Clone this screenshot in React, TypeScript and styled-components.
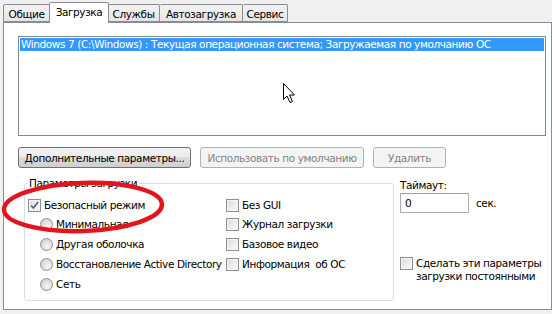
import React from 'react';
import styled, {createGlobalStyle} from 'styled-components';

const GlobalStyle = createGlobalStyle`
  html, body {
    margin: 0;
    padding: 0;
    background: #f0f0f0;
  }
  body {
    font-family: "DejaVu Sans", Tahoma, sans-serif;
    font-size: 10.5px;
    letter-spacing: -0.4px;
    color: #000;
  }
`;

const tabs = [
  {title: 'Общие', width: 47},
  {title: 'Загрузка', width: 60, active: true},
  {title: 'Службы', width: 52},
  {title: 'Автозагрузка', width: 83},
  {title: 'Сервис', width: 45},
];

export default function App() {
  return (
      <Window>
        <GlobalStyle/>
        <TabStrip>
          {tabs.map(t => (
              <Tab key={t.title} $width={t.width} $active={!!t.active}>{t.title}</Tab>
          ))}
        </TabStrip>
        <Panel>
          <ListBox>
            <ListItem $selected>Windows 7 (C:\Windows) : Текущая операционная система; Загружаемая по умолчанию ОС</ListItem>
          </ListBox>
          <ButtonRow>
            <Button $width={173}>Дополнительные параметры...</Button>
            <Button $width={164} disabled>Использовать по умолчанию</Button>
            <Button $width={73} disabled>Удалить</Button>
          </ButtonRow>
          <Lower>
            <GroupBox>
              <Legend>Параметры загрузки</Legend>
              <GroupGrid>
                <Column>
                  <Option>
                    <CheckBox checked/>
                    Безопасный режим
                  </Option>
                  <Option $indent>
                    <Radio/>
                    Минимальная
                  </Option>
                  <Option $indent>
                    <Radio/>
                    Другая оболочка
                  </Option>
                  <Option $indent>
                    <Radio/>
                    Восстановление Active Directory
                  </Option>
                  <Option $indent>
                    <Radio/>
                    Сеть
                  </Option>
                </Column>
                <Column>
                  <Option>
                    <CheckBox/>
                    Без GUI
                  </Option>
                  <Option>
                    <CheckBox/>
                    Журнал загрузки
                  </Option>
                  <Option>
                    <CheckBox/>
                    Базовое видео
                  </Option>
                  <Option>
                    <CheckBox/>
                    Информация&nbsp; об ОС
                  </Option>
                </Column>
              </GroupGrid>
            </GroupBox>
            <SideColumn>
              <Caption>Таймаут:</Caption>
              <TimeoutRow>
                <TextInput>0</TextInput>
                <span>сек.</span>
              </TimeoutRow>
              <PermanentRow>
                <CheckBox/>
                <span>Сделать эти параметры<br/>загрузки постоянными</span>
              </PermanentRow>
            </SideColumn>
          </Lower>
        </Panel>
        <Overlay width="552" height="314" viewBox="0 0 552 314">
          <ellipse cx="83" cy="207" rx="79" ry="24" transform="rotate(-2 83 207)"
                   fill="none" stroke="#e3141c" strokeWidth="4.5"/>
          <path d="M283.5 83.5 L283.5 99.5 L287 96 L290 102.5 L292.5 101.5 L289.5 95 L294.5 95 Z"
                fill="#fff" stroke="#000" strokeWidth="1" strokeLinejoin="miter"/>
        </Overlay>
      </Window>
  );
}

function CheckBox({checked}: { checked?: boolean }) {
  return (
      <Box>
        {checked && (
            <svg width="9" height="9" viewBox="0 0 9 9">
              <path d="M1 4.5 L3.5 7 L8 1" fill="none" stroke="#4a5f97" strokeWidth="1.6"/>
            </svg>
        )}
      </Box>
  );
}

const Window = styled.div`
  position: relative;
  width: 552px;
  height: 314px;
  overflow: hidden;
  background: #f0f0f0;
  display: flex;
  flex-direction: column;
`;

const TabStrip = styled.div`
  display: flex;
  align-items: flex-end;
  height: 22px;
  padding-left: 3px;
`;

const Tab = styled.div<{ $width: number; $active: boolean }>`
  box-sizing: border-box;
  width: ${p => p.$width}px;
  height: ${p => (p.$active ? 21 : 18)}px;
  margin: 0 ${p => (p.$active ? -1 : 0)}px ${p => (p.$active ? -1 : 0)}px;
  padding-top: 3px;
  text-align: center;
  border: 1px solid #898c95;
  border-bottom: ${p => (p.$active ? 'none' : '1px solid #898c95')};
  border-left: ${p => (p.$active ? '1px solid #898c95' : 'none')};
  border-radius: 2px 2px 0 0;
  background: ${p => (p.$active ? '#fff' : 'linear-gradient(#f3f3f3, #e6e6e6)')};
  position: relative;
  z-index: ${p => (p.$active ? 1 : 0)};

  &:first-child {
    border-left: 1px solid #898c95;
  }
`;

const Panel = styled.div`
  box-sizing: border-box;
  margin-left: 3px;
  width: 549px;
  height: 288px;
  padding: 13px 0 0 14px;
  background: #fff;
  border: 1px solid #898c95;
`;

const ListBox = styled.div`
  box-sizing: border-box;
  width: 528px;
  height: 100px;
  padding: 1px;
  border: 1px solid #828790;
`;

const ListItem = styled.div<{ $selected?: boolean }>`
  height: 13px;
  line-height: 13px;
  padding-left: 1px;
  white-space: nowrap;
  overflow: hidden;
  background: ${p => (p.$selected ? '#3399ff' : 'transparent')};
  color: ${p => (p.$selected ? '#fff' : '#000')};
`;

const ButtonRow = styled.div`
  display: flex;
  gap: 9px;
  margin-top: 11px;
`;

const Button = styled.button<{ $width: number }>`
  box-sizing: border-box;
  width: ${p => p.$width}px;
  height: 21px;
  padding: 0;
  font: inherit;
  letter-spacing: inherit;
  color: #000;
  border: 1px solid #707070;
  border-radius: 3px;
  background: linear-gradient(#f2f2f2 0%, #ebebeb 50%, #dddddd 50%, #cfcfcf 100%);

  &:disabled {
    color: #838383;
    border-color: #adb2b5;
    background: #f4f4f4;
  }
`;

const Lower = styled.div`
  display: flex;
  gap: 6px;
  margin-top: 11px;
  padding-left: 6px;
`;

const GroupBox = styled.div`
  box-sizing: border-box;
  width: 370px;
  height: 118px;
  margin-top: 4px;
  padding: 0 0 0 3px;
  border: 1px solid #d5dfe5;
  border-radius: 3px;
`;

const Legend = styled.div`
  width: fit-content;
  height: 13px;
  margin: -7px 0 0 -1px;
  padding: 0 2px;
  line-height: 13px;
  background: #fff;
`;

const GroupGrid = styled.div`
  display: grid;
  grid-template-columns: 198px 1fr;
  margin-top: 6px;
`;

const Column = styled.div`
  display: flex;
  flex-direction: column;
`;

const Option = styled.div<{ $indent?: boolean }>`
  display: flex;
  align-items: center;
  gap: 3px;
  height: 20px;
  padding-left: ${p => (p.$indent ? 12 : 0)}px;
  white-space: nowrap;

  &:first-child {
    height: 18px;
  }
`;

const Box = styled.span`
  box-sizing: border-box;
  flex: none;
  width: 13px;
  height: 13px;
  display: flex;
  align-items: center;
  justify-content: center;
  border: 1px solid #8e8f8f;
  background: linear-gradient(135deg, #dcdcdc, #fbfbfb);
  box-shadow: inset 0 0 0 1px #f4f4f4;
`;

const Radio = styled.span`
  box-sizing: border-box;
  flex: none;
  width: 13px;
  height: 13px;
  border-radius: 50%;
  border: 1px solid #8e8f8f;
  background: radial-gradient(circle at 60% 65%, #f6f6f6 0%, #d6d6d6 70%, #c4c4c4 100%);
`;

const SideColumn = styled.div`
  display: flex;
  flex-direction: column;
`;

const Caption = styled.div`
  line-height: 13px;
`;

const TimeoutRow = styled.div`
  display: flex;
  align-items: center;
  gap: 7px;
  margin-top: 1px;
`;

const TextInput = styled.div`
  box-sizing: border-box;
  width: 69px;
  height: 20px;
  padding: 3px 0 0 4px;
  border: 1px solid #abadb3;
  border-top-color: #9aa0a8;
`;

const PermanentRow = styled.div`
  display: flex;
  align-items: flex-start;
  gap: 3px;
  margin-top: 44px;
  line-height: 13px;
`;

const Overlay = styled.svg`
  position: absolute;
  left: 0;
  top: 0;
  pointer-events: none;
`;
